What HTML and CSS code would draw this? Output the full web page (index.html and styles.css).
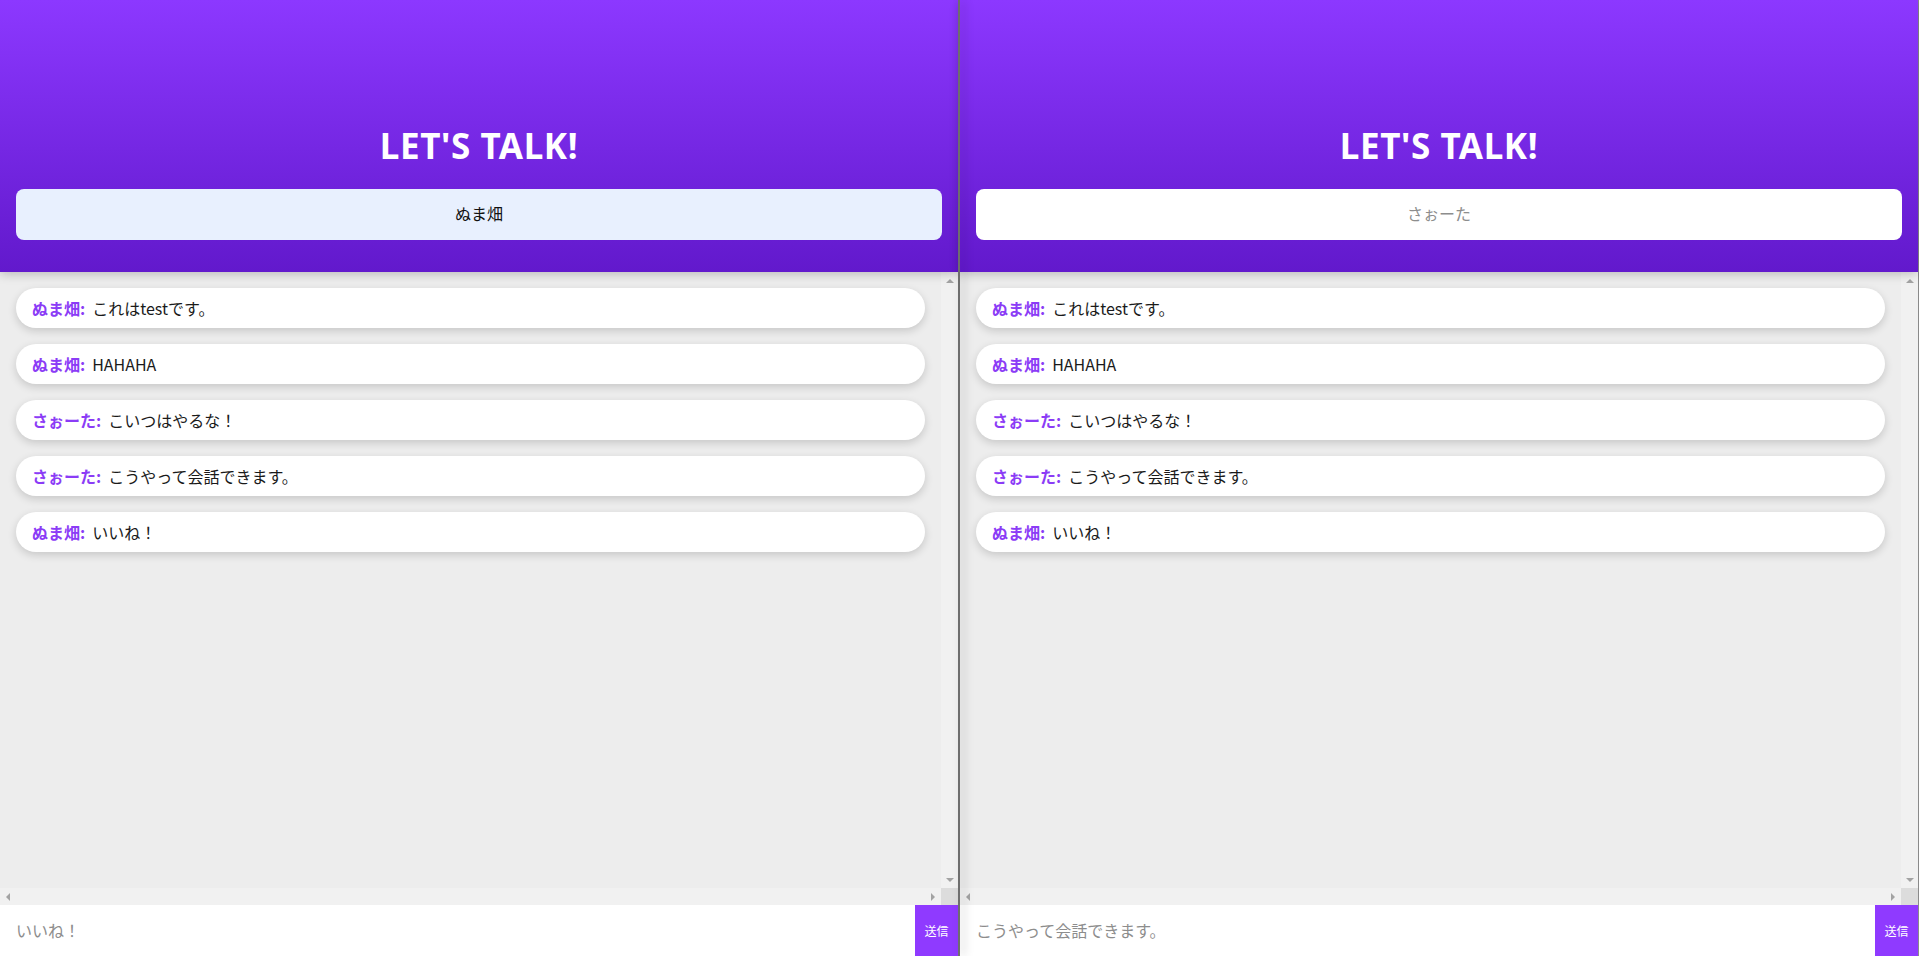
FILE: index.html
```html
<!DOCTYPE html>
<html lang="ja">
<head>
<meta charset="utf-8">
<title>LET'S TALK!</title>
<link rel="stylesheet" href="styles.css">
</head>
<body>
<div class="screen">
  <section class="pane">
    <header class="head">
      <h1 class="title">LET'S TALK!</h1>
      <input class="name name-filled" type="text" value="ぬま畑">
    </header>
    <div class="board">
      <div class="board-main">
        <ul class="list">
          <li class="msg"><span class="who">ぬま畑:</span><span class="txt">これはtestです。</span></li>
          <li class="msg"><span class="who">ぬま畑:</span><span class="txt">HAHAHA</span></li>
          <li class="msg"><span class="who">さぉーた:</span><span class="txt">こいつはやるな！</span></li>
          <li class="msg"><span class="who">さぉーた:</span><span class="txt">こうやって会話できます。</span></li>
          <li class="msg"><span class="who">ぬま畑:</span><span class="txt">いいね！</span></li>
        </ul>
        <div class="vbar"><span class="arr arr-up"></span><span class="arr arr-down"></span></div>
      </div>
      <div class="hbar">
        <div class="htrack"><span class="arr arr-left"></span><span class="arr arr-right"></span></div>
        <div class="corner"></div>
      </div>
    </div>
    <form class="send">
      <input class="send-input" type="text" placeholder="いいね！">
      <button class="send-btn" type="button">送信</button>
    </form>
  </section>
  <div class="divider"></div>
  <section class="pane">
    <header class="head">
      <h1 class="title">LET'S TALK!</h1>
      <input class="name" type="text" placeholder="さぉーた">
    </header>
    <div class="board">
      <div class="board-main">
        <ul class="list">
          <li class="msg"><span class="who">ぬま畑:</span><span class="txt">これはtestです。</span></li>
          <li class="msg"><span class="who">ぬま畑:</span><span class="txt">HAHAHA</span></li>
          <li class="msg"><span class="who">さぉーた:</span><span class="txt">こいつはやるな！</span></li>
          <li class="msg"><span class="who">さぉーた:</span><span class="txt">こうやって会話できます。</span></li>
          <li class="msg"><span class="who">ぬま畑:</span><span class="txt">いいね！</span></li>
        </ul>
        <div class="vbar"><span class="arr arr-up"></span><span class="arr arr-down"></span></div>
      </div>
      <div class="hbar">
        <div class="htrack"><span class="arr arr-left"></span><span class="arr arr-right"></span></div>
        <div class="corner"></div>
      </div>
    </div>
    <form class="send">
      <input class="send-input" type="text" placeholder="こうやって会話できます。">
      <button class="send-btn" type="button">送信</button>
    </form>
  </section>
  <div class="edge"></div>
</div>
</body>
</html>
```
FILE: styles.css
```css
* { box-sizing: border-box; }
html, body { margin: 0; padding: 0; }
body {
  font-family: "Noto Sans CJK JP", "Noto Sans", sans-serif;
  font-size: 16px;
  color: #222;
  background: #ededed;
  overflow: hidden;
}
.screen {
  display: flex;
  width: 1919px;
  height: 956px;
}
.pane {
  width: 958px;
  height: 956px;
  display: flex;
  flex-direction: column;
  flex: none;
}
.divider {
  width: 2px;
  flex: none;
  background: #6e6e6e;
  position: relative;
  z-index: 3;
  box-shadow: 4px 0 10px rgba(0,0,0,0.28);
}
.edge {
  width: 1px;
  flex: none;
  background: #8a8a8a;
}
.head {
  height: 272px;
  flex: none;
  display: flex;
  flex-direction: column;
  justify-content: flex-end;
  padding: 0 16px 32px;
  background: linear-gradient(to bottom, #8c38ff 0%, #6219cc 100%);
  position: relative;
  z-index: 2;
  box-shadow: 0 2px 10px rgba(0,0,0,0.22);
}
.title {
  margin: 0 0 23px;
  font-family: "Noto Sans", "Noto Sans CJK JP", sans-serif;
  font-weight: 700;
  font-size: 35px;
  line-height: 40px;
  letter-spacing: 0.6px;
  color: #fff;
  text-align: center;
}
.name {
  display: block;
  width: 100%;
  height: 51px;
  border: none;
  border-radius: 8px;
  background: #fff;
  font: inherit;
  font-size: 16px;
  color: #111;
  text-align: center;
  outline: none;
  padding: 0 0 3px;
}
.name-filled { background: #e8f0fe; }
.name::placeholder { color: #8d8d8d; }
.board {
  flex: 1;
  display: flex;
  flex-direction: column;
  background: #ededed;
  min-height: 0;
}
.board-main {
  flex: 1;
  display: flex;
  min-height: 0;
}
.list {
  flex: 1;
  margin: 0;
  padding: 16px;
  list-style: none;
  display: flex;
  flex-direction: column;
  gap: 16px;
}
.msg {
  height: 40px;
  display: flex;
  align-items: center;
  padding: 0 16px;
  background: #fff;
  border-radius: 20px;
  box-shadow: 0 3px 8px rgba(0,0,0,0.16);
  font-size: 16px;
  color: #1a1a1a;
}
.who {
  font-weight: 700;
  color: #8b3cf6;
  margin-right: 7px;
}
.vbar {
  width: 17px;
  flex: none;
  background: #f1f1f1;
  display: flex;
  flex-direction: column;
  justify-content: space-between;
  align-items: center;
  padding: 7px 0 6px;
}
.hbar {
  height: 17px;
  flex: none;
  display: flex;
}
.htrack {
  flex: 1;
  background: #f1f1f1;
  display: flex;
  justify-content: space-between;
  align-items: center;
  padding: 0 6px 0 6px;
}
.corner {
  width: 17px;
  background: #dcdcdc;
}
.arr {
  display: block;
  width: 0;
  height: 0;
  border-style: solid;
  border-color: transparent;
}
.arr-up { border-width: 0 4px 4px; border-bottom-color: #a3a3a3; }
.arr-down { border-width: 4px 4px 0; border-top-color: #a3a3a3; }
.arr-left { border-width: 4px 4px 4px 0; border-right-color: #a3a3a3; }
.arr-right { border-width: 4px 0 4px 4px; border-left-color: #a3a3a3; }
.send {
  height: 51px;
  flex: none;
  display: flex;
  margin: 0;
  background: #fff;
}
.send-input {
  flex: 1;
  min-width: 0;
  border: none;
  outline: none;
  padding: 0 16px 2px;
  font: inherit;
  font-size: 16px;
  background: #fff;
}
.send-input::placeholder { color: #8d8d8d; }
.send-btn {
  width: 43px;
  flex: none;
  border: none;
  padding: 0;
  background: #8f3aff;
  color: #fff;
  font: inherit;
  font-size: 12px;
}
```
